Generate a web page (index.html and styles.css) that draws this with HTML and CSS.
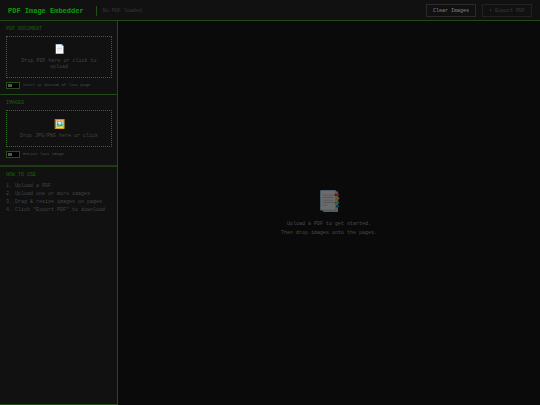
FILE: index.html
```
<!DOCTYPE html>
<html lang="en">
<head>
    <meta charset="UTF-8">
    <meta name="viewport" content="width=device-width, initial-scale=1.0">
    <title>PDF Image Embedder</title>
    <link rel="stylesheet" href="styles.css">
</head>
<body>
    <header class="topbar">
        <h1>PDF Image Embedder</h1>
        <span class="status">No PDF loaded</span>
        <button type="button" class="btn btn-clear">Clear Images</button>
        <button type="button" class="btn btn-export" disabled>⬇ Export PDF</button>
    </header>

    <div class="workspace">
        <aside class="sidebar">
            <section class="panel">
                <h2>PDF DOCUMENT</h2>
                <button type="button" class="drop-zone drop-pdf">
                    <span class="drop-icon">📄</span>
                    <span>Drop PDF here or click to upload</span>
                </button>
                <label class="toggle">
                    <input type="checkbox">
                    <span>Start at bottom of last page</span>
                </label>
            </section>

            <section class="panel panel-images">
                <h2>IMAGES</h2>
                <button type="button" class="drop-zone drop-images">
                    <span class="drop-icon">🖼️</span>
                    <span>Drop JPG/PNG here or click</span>
                </button>
                <label class="toggle">
                    <input type="checkbox">
                    <span>Retain last image</span>
                </label>
            </section>

            <section class="panel panel-help">
                <h2>HOW TO USE</h2>
                <ol class="steps">
                    <li>Upload a PDF</li>
                    <li>Upload one or more images</li>
                    <li>Drag &amp; resize images on pages</li>
                    <li>Click "Export PDF" to download</li>
                </ol>
            </section>
        </aside>

        <main class="viewer">
            <div class="empty-icon">📑</div>
            <p>Upload a PDF to get started.<br>Then drop images onto the pages.</p>
        </main>
    </div>
</body>
</html>
```
FILE: styles.css
```
* {
    margin: 0;
    padding: 0;
    box-sizing: border-box;
}

body {
    display: flex;
    flex-direction: column;
    min-height: 100vh;
    background: #0a0a0a;
    color: #444;
    font-family: "Liberation Mono", "Courier New", monospace;
    font-size: 5px;
}

button {
    font: inherit;
    cursor: pointer;
}

.topbar {
    display: flex;
    align-items: center;
    gap: 6px;
    padding: 4px 8px 3px;
    background: #111;
    border-bottom: 1px solid #234a18;
}

.topbar h1 {
    padding-right: 6px;
    font-size: 7px;
    line-height: 8px;
    color: #0b9c0b;
}

.status {
    padding-left: 6px;
    border-left: 1px solid #23501a;
    line-height: 10px;
    color: #383838;
}

.btn {
    height: 13px;
    padding: 0 6px;
    background: #111;
    border: 1px solid #2a2a2a;
    color: #888;
}

.btn-clear {
    margin-left: auto;
}

.btn-export {
    color: #3c3c3c;
    border-color: #222;
}

.workspace {
    display: flex;
    flex: 1;
}

.sidebar {
    display: flex;
    flex-direction: column;
    width: 118px;
    background: #111;
    border-right: 1px solid #234a18;
}

.panel {
    padding: 5px 5px 5px 6px;
    border-bottom: 1px solid #234a18;
}

.panel-images {
    padding-bottom: 7px;
    border-bottom: 2px solid #1d3a15;
}

.panel-help {
    flex: 1;
}

.panel h2 {
    margin-bottom: 4px;
    font-size: 5px;
    line-height: 6px;
    font-weight: normal;
    color: #1f5c12;
}

.drop-zone {
    display: flex;
    flex-direction: column;
    align-items: center;
    justify-content: center;
    gap: 2px;
    width: 100%;
    padding: 4px 10px;
    background: #111;
    border: 1px dotted #2c6e1c;
    color: #444;
    line-height: 6px;
}

.drop-pdf {
    height: 42px;
}

.drop-images {
    height: 37px;
}

.drop-icon {
    font-size: 9px;
    line-height: 12px;
}

.toggle {
    display: flex;
    align-items: center;
    gap: 3px;
    margin-top: 4px;
    font-size: 4px;
    line-height: 7px;
    color: #505050;
}

.toggle input {
    appearance: none;
    display: flex;
    width: 14px;
    height: 7px;
    padding: 1px;
    background: #000;
    border: 1px solid #25501a;
}

.toggle input::before {
    content: "";
    width: 4px;
    background: #555;
}

.toggle input:checked {
    justify-content: flex-end;
}

.steps {
    list-style: none;
    counter-reset: step;
    line-height: 8px;
    color: #444;
}

.steps li {
    counter-increment: step;
}

.steps li::before {
    content: counter(step) ". ";
}

.viewer {
    display: flex;
    flex: 1;
    flex-direction: column;
    align-items: center;
    justify-content: center;
    gap: 4px;
    padding-top: 2px;
    color: #4a4a4a;
    line-height: 9px;
    text-align: center;
}

.empty-icon {
    font-size: 20px;
    line-height: 26px;
    opacity: 0.4;
}
```
